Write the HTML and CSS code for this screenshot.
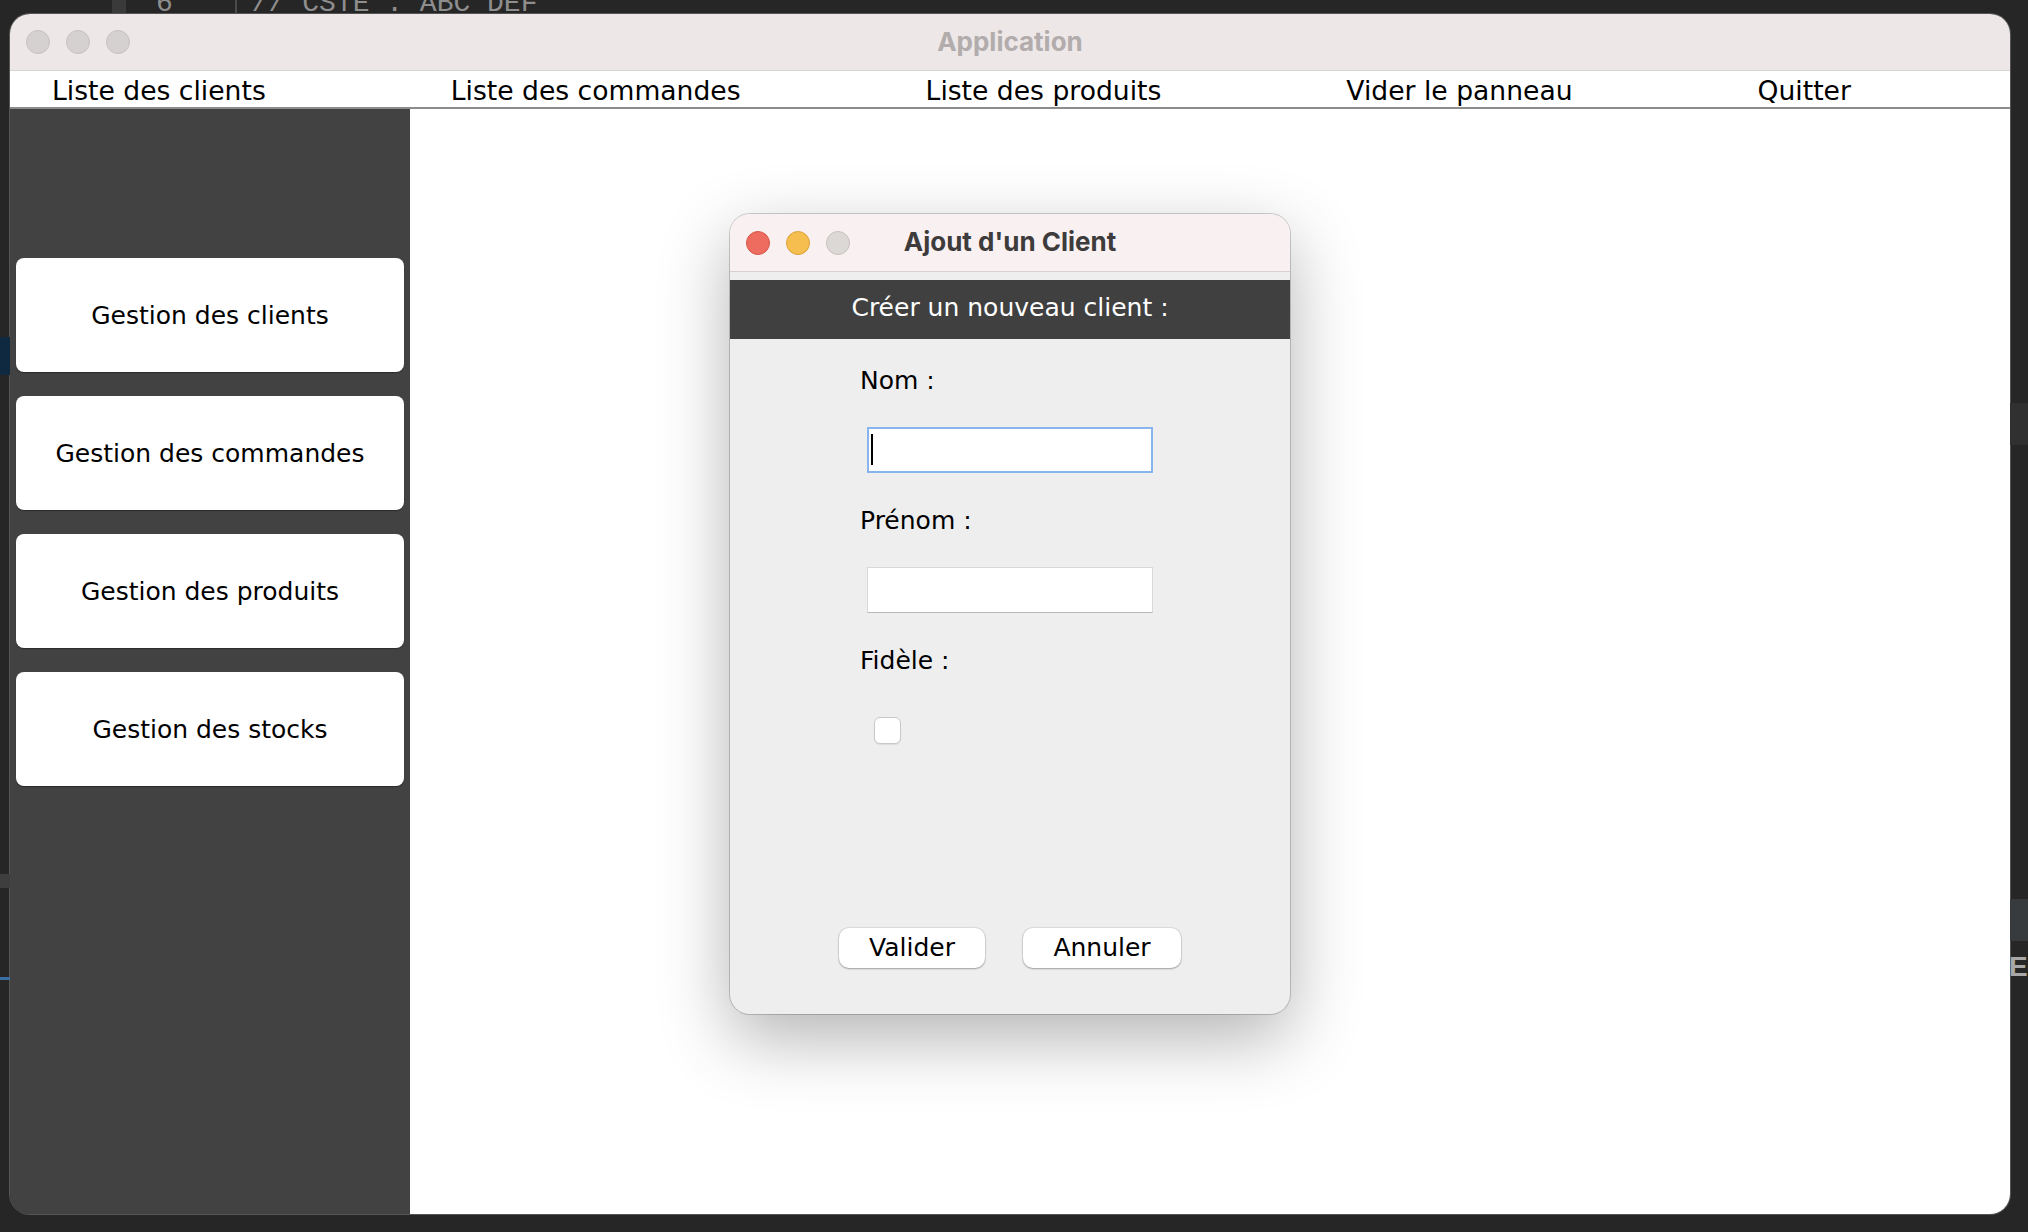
FILE: index.html
```html
<!DOCTYPE html>
<html lang="fr">
<head>
<meta charset="utf-8">
<title>Application</title>
<link rel="stylesheet" href="styles.css">
</head>
<body>
<div class="desktop">
  <div class="bg-code">
    <span class="gutter-bar"></span>
    <span class="line-no">6</span>
    <span class="code-sep"></span>
    <span class="code-text">// CSTE : ABC DEF</span>
  </div>
  <div class="bg-left-blue"></div>
  <div class="bg-left-grey"></div>
  <div class="bg-left-line"></div>
  <div class="bg-right-block1"></div>
  <div class="bg-right-block2"></div>
  <div class="bg-right-text">EA</div>

  <div class="window">
    <div class="titlebar">
      <div class="lights">
        <span class="light inactive"></span>
        <span class="light inactive"></span>
        <span class="light inactive"></span>
      </div>
      <div class="win-title">Application</div>
    </div>
    <nav class="menubar">
      <span class="menu-item">Liste des clients</span>
      <span class="menu-item">Liste des commandes</span>
      <span class="menu-item">Liste des produits</span>
      <span class="menu-item">Vider le panneau</span>
      <span class="menu-item">Quitter</span>
    </nav>
    <div class="content">
      <aside class="sidebar">
        <button class="side-btn">Gestion des clients</button>
        <button class="side-btn">Gestion des commandes</button>
        <button class="side-btn">Gestion des produits</button>
        <button class="side-btn">Gestion des stocks</button>
      </aside>
      <main class="panel"></main>
    </div>
  </div>

  <div class="dialog">
    <div class="dlg-titlebar">
      <div class="lights">
        <span class="light red"></span>
        <span class="light yellow"></span>
        <span class="light grey"></span>
      </div>
      <div class="dlg-title">Ajout d'un Client</div>
    </div>
    <div class="dlg-gap"></div>
    <div class="dlg-header">Créer un nouveau client :</div>
    <div class="dlg-body">
      <div class="form">
        <div class="row"><span class="label">Nom :</span></div>
        <div class="row"><div class="field focused"><span class="caret"></span></div></div>
        <div class="row"><span class="label">Prénom :</span></div>
        <div class="row"><div class="field"></div></div>
        <div class="row"><span class="label">Fidèle :</span></div>
        <div class="row"><span class="checkbox"></span></div>
      </div>
      <div class="actions">
        <button class="dlg-btn">Valider</button>
        <button class="dlg-btn">Annuler</button>
      </div>
    </div>
  </div>
</div>
</body>
</html>
```

FILE: styles.css
```css
* { box-sizing: border-box; }

html, body {
  margin: 0;
  padding: 0;
  width: 2028px;
  height: 1232px;
  overflow: hidden;
  background: #252525;
}

.desktop {
  position: relative;
  width: 2028px;
  height: 1232px;
  background: #262626;
  display: flex;
  flex-direction: column;
}

/* background editor remnants */
.bg-code {
  height: 14px;
  overflow: hidden;
  display: flex;
  align-items: flex-end;
  font-family: "Liberation Mono", "DejaVu Sans Mono", monospace;
  font-size: 28px;
  line-height: 28px;
  color: #8e8e8e;
  flex: none;
}
.gutter-bar {
  width: 14px;
  height: 14px;
  margin-left: 112px;
  background: #3a3a3a;
  align-self: flex-start;
}
.line-no {
  margin-left: 30px;
  margin-bottom: -4px;
}
.code-sep {
  width: 2px;
  height: 14px;
  margin-left: 62px;
  background: #4a4a4a;
  align-self: flex-start;
}
.code-text {
  margin-left: 15px;
  margin-bottom: -4px;
  white-space: pre;
}

.bg-left-blue {
  position: absolute;
  left: 0;
  top: 337px;
  width: 10px;
  height: 38px;
  background: #0f2940;
}
.bg-left-grey {
  position: absolute;
  left: 0;
  top: 874px;
  width: 10px;
  height: 14px;
  background: #3e3e3e;
}
.bg-left-line {
  position: absolute;
  left: 0;
  top: 977px;
  width: 10px;
  height: 3px;
  background: #3a6ea5;
}
.bg-right-block1 {
  position: absolute;
  right: 0;
  top: 403px;
  width: 18px;
  height: 42px;
  background: #303030;
}
.bg-right-block2 {
  position: absolute;
  right: 0;
  top: 899px;
  width: 18px;
  height: 42px;
  background: #383b3e;
}
.bg-right-text {
  position: absolute;
  left: 2009px;
  top: 952px;
  font-family: "Liberation Sans", Arial, sans-serif;
  font-weight: bold;
  font-size: 28px;
  line-height: 30px;
  color: #a8a8a8;
  white-space: nowrap;
}

/* main window */
.window {
  margin-left: 10px;
  width: 2000px;
  height: 1200px;
  border-radius: 20px;
  overflow: hidden;
  display: flex;
  flex-direction: column;
  box-shadow: 0 0 0 1px #555;
  flex: none;
}

.titlebar {
  height: 57px;
  background: #ede7e7;
  border-bottom: 1px solid #d8d3d3;
  display: flex;
  align-items: center;
  position: relative;
  flex: none;
}

.lights {
  display: flex;
  gap: 16px;
  padding-left: 16px;
}
.light {
  width: 24px;
  height: 24px;
  border-radius: 50%;
  display: block;
}
.light.inactive {
  background: #d6d1d1;
  border: 1px solid #c6c1c1;
}
.light.red { background: #ed6b5f; border: 1px solid #d65548; }
.light.yellow { background: #f5be4f; border: 1px solid #d9a23a; }
.light.grey { background: #dcd8d6; border: 1px solid #c5c1bf; }

.win-title {
  position: absolute;
  left: 0;
  right: 0;
  top: 0;
  bottom: 2px;
  display: flex;
  align-items: center;
  justify-content: center;
  font-family: "Inter", "Roboto", sans-serif;
  font-weight: 700;
  font-size: 26px;
  color: #b2acac;
  pointer-events: none;
}

.menubar {
  height: 38px;
  background: #ffffff;
  border-bottom: 2px solid #8c8c8c;
  display: flex;
  align-items: center;
  gap: 185px;
  padding-left: 42px;
  font-family: "DejaVu Sans", sans-serif;
  font-size: 26.6px;
  color: #000;
  flex: none;
}
.menu-item { white-space: nowrap; margin-top: 2px; }

.content {
  flex: 1;
  display: flex;
  min-height: 0;
}

.sidebar {
  width: 400px;
  background: #424242;
  display: flex;
  flex-direction: column;
  gap: 24px;
  padding: 149px 6px 0 6px;
  flex: none;
}

.side-btn {
  height: 114px;
  background: #ffffff;
  border: none;
  border-radius: 8px;
  font-family: "DejaVu Sans", sans-serif;
  font-size: 25px;
  color: #000;
  box-shadow: 0 1px 1px rgba(0,0,0,0.35);
  padding: 0;
}

.panel {
  flex: 1;
  background: #ffffff;
}

/* dialog */
.dialog {
  position: absolute;
  left: 730px;
  top: 214px;
  width: 560px;
  height: 800px;
  border-radius: 20px;
  overflow: hidden;
  background: #eeeeee;
  display: flex;
  flex-direction: column;
  box-shadow: 0 0 0 1px rgba(0,0,0,0.18), 0 24px 70px rgba(0,0,0,0.30);
}

.dlg-titlebar {
  height: 58px;
  background: #f9f1f1;
  border-bottom: 1px solid #d5d0d0;
  display: flex;
  align-items: center;
  position: relative;
  flex: none;
}
.dlg-titlebar .lights { padding-left: 16px; }

.dlg-title {
  position: absolute;
  inset: 0 0 3px 0;
  display: flex;
  align-items: center;
  justify-content: center;
  font-family: "Inter", "Roboto", sans-serif;
  font-weight: 700;
  font-size: 26px;
  color: #3d3b3b;
}

.dlg-gap {
  height: 8px;
  background: #eeeeee;
  flex: none;
}

.dlg-header {
  height: 59px;
  padding-bottom: 4px;
  background: #404040;
  color: #ffffff;
  display: flex;
  align-items: center;
  justify-content: center;
  font-family: "DejaVu Sans", sans-serif;
  font-size: 25px;
  flex: none;
}

.dlg-body {
  flex: 1;
  display: flex;
  flex-direction: column;
  padding: 6px 0 46px 0;
  font-family: "DejaVu Sans", sans-serif;
  font-size: 25px;
  color: #000;
}

.form {
  display: grid;
  grid-template-rows: repeat(6, 70px);
  padding-left: 130px;
}
.row {
  display: flex;
  align-items: center;
}

.field {
  width: 286px;
  height: 46px;
  margin-left: 7px;
  background: #ffffff;
  border: 1px solid #d9d9d9;
  border-bottom-color: #b9b9b9;
  position: relative;
}
.field.focused {
  border: 2px solid #89b5ef;
}
.caret {
  position: absolute;
  left: 2px;
  top: 5px;
  width: 2px;
  height: 31px;
  background: #000;
}

.checkbox {
  width: 27px;
  height: 27px;
  margin-left: 14px;
  background: #ffffff;
  border: 1px solid #c9c9c9;
  border-radius: 6px;
  box-shadow: 0 1px 1px rgba(0,0,0,0.08);
  display: block;
}

.actions {
  margin-top: auto;
  display: flex;
  justify-content: center;
  gap: 38px;
}

.dlg-btn {
  height: 40px;
  padding: 0 0 2px 0;
  background: #ffffff;
  border: none;
  border-radius: 10px;
  box-shadow: 0 0 0 1px rgba(0,0,0,0.07), 0 1px 2px rgba(0,0,0,0.28);
  font-family: "DejaVu Sans", sans-serif;
  font-size: 25px;
  color: #000;
}
.dlg-btn:first-child { width: 146px; }
.dlg-btn:last-child { width: 158px; }
```
